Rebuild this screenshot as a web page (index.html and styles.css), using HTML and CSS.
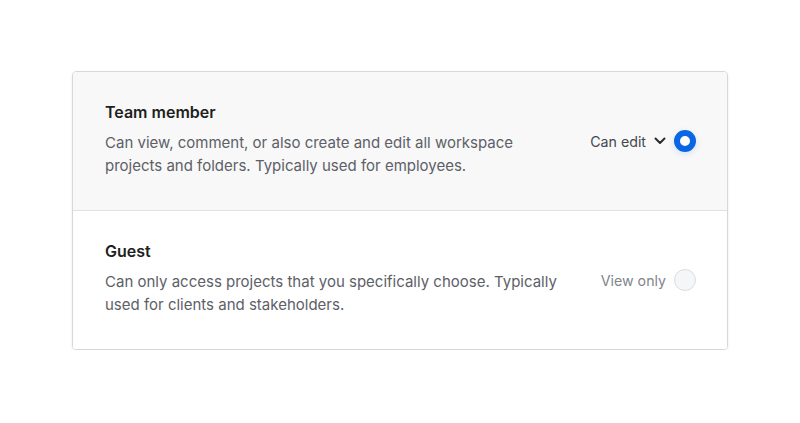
FILE: index.html
```html
<!DOCTYPE html>
<html lang="en">
<head>
    <meta charset="UTF-8">
    <meta name="viewport" content="width=device-width, initial-scale=1.0">
    <title>Member roles</title>
    <link rel="stylesheet" href="styles.css">
</head>
<body>
    <div class="roles">
        <label class="role selected">
            <div class="role-text">
                <div class="role-title">Team member</div>
                <div class="role-desc">Can view, comment, or also create and edit all workspace projects and folders. Typically used for employees.</div>
            </div>
            <div class="role-access">
                <span class="access-label">Can edit</span>
                <svg class="chevron" width="12" height="8" viewBox="0 0 12 8"><path d="M1.5 1.5 L6 6 L10.5 1.5" fill="none" stroke="#2b2d31" stroke-width="2" stroke-linecap="round" stroke-linejoin="round"/></svg>
                <span class="radio checked"></span>
            </div>
        </label>
        <label class="role">
            <div class="role-text">
                <div class="role-title">Guest</div>
                <div class="role-desc">Can only access projects that you specifically choose. Typically used for clients and stakeholders.</div>
            </div>
            <div class="role-access">
                <span class="access-label muted">View only</span>
                <span class="radio"></span>
            </div>
        </label>
    </div>
</body>
</html>
```

FILE: styles.css
```css
* {
    box-sizing: border-box;
    margin: 0;
    padding: 0;
}

body {
    font-family: Inter, 'Noto Sans', sans-serif;
    background: #ffffff;
    padding: 71px 72px 0 72px;
    width: 800px;
}

.roles {
    border: 1px solid #d5d8dd;
    border-radius: 4px;
    box-shadow: 0 1px 3px rgba(0, 0, 0, 0.08);
    overflow: hidden;
}

.role {
    display: flex;
    align-items: center;
    justify-content: space-between;
    padding: 29px 31px 35px 32px;
    background: #ffffff;
    cursor: pointer;
    height: 138px;
}

.role + .role {
    border-top: 1px solid #dfe1e5;
    height: 139px;
}

.role.selected {
    background: #f8f8f8;
}

.role-text {
    max-width: 460px;
}

.role-title {
    font-size: 16px;
    font-weight: 600;
    color: #1e1f21;
    line-height: 24px;
    margin-bottom: 7px;
}

.role-desc {
    font-size: 15px;
    line-height: 23px;
    color: #5d6067;
}

.role-access {
    display: flex;
    align-items: center;
    margin-top: 6px;
}

.access-label {
    font-size: 14.2px;
    color: #44474d;
}

.access-label.muted {
    color: #80848b;
}

.chevron {
    margin-left: 8px;
}

.radio {
    width: 22px;
    height: 22px;
    border-radius: 50%;
    border: 1px solid #dadce0;
    background: #f5f6f8;
    margin-left: 8px;
}

.radio.checked {
    border: 6px solid #0a66e2;
    background: #ffffff;
    box-shadow: 0 2px 6px rgba(10, 102, 226, 0.15);
}
```
